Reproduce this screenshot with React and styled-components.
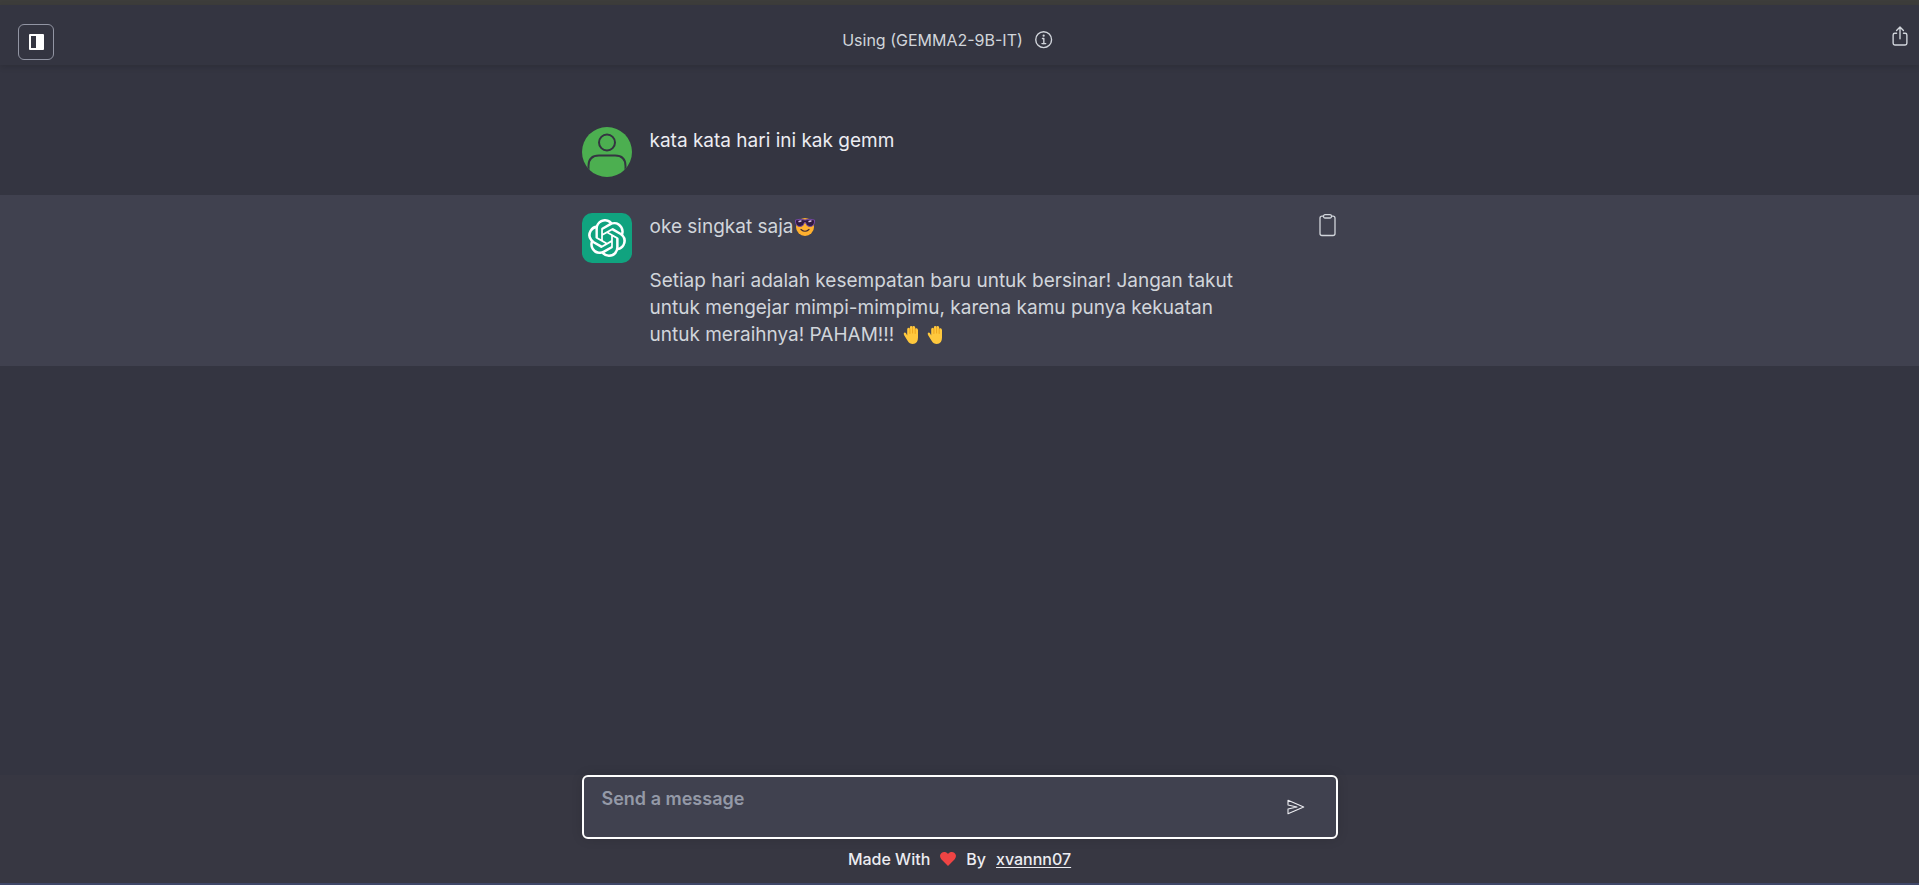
import React from "react";
import styled, { createGlobalStyle } from "styled-components";
import { IoInformationCircleOutline, IoShareOutline } from "react-icons/io5";
import { SiOpenai } from "react-icons/si";

const GlobalStyle = createGlobalStyle`
  *, *::before, *::after { box-sizing: border-box; }
  body {
    margin: 0;
    background: #343541;
    color: #ececf1;
    font-family: Inter, "Open Sans", sans-serif;
  }
  p { margin: 0; }
  svg { display: block; }
`;

const Page = styled.div`
  display: flex;
  flex-direction: column;
  min-height: 100vh;
  border-top: 5px solid #3d3d3b;
  border-bottom: 2px solid #3f4768;
`;

const Header = styled.header`
  display: grid;
  grid-template-columns: 1fr auto 1fr;
  align-items: start;
  height: 60px;
  padding: 0 8px 0 18px;
  color: #d1d5db;
  box-shadow: 0 2px 6px rgba(0, 0, 0, 0.14);
`;

const IconButton = styled.button`
  display: inline-flex;
  align-items: center;
  justify-content: center;
  padding: 0;
  border: 0;
  background: none;
  color: inherit;
  cursor: pointer;
`;

const SidebarButton = styled(IconButton)`
  width: 36px;
  height: 36px;
  margin-top: 19px;
  border: 1px solid #9295a3;
  border-radius: 6px;
  color: #fff;
`;

const ShareButton = styled(IconButton)`
  justify-self: end;
  margin-top: 20px;
`;

const Model = styled.div`
  display: flex;
  align-items: center;
  gap: 10px;
  height: 70px;
  margin-right: 32px;
  font-size: 16px;
  line-height: 24px;
`;

const Chat = styled.main`
  flex: 1;
  padding-top: 44px;
`;

const Row = styled.article`
  padding: 18px 16px;
  background: ${(p) => (p.$assistant ? "#40414f" : "transparent")};
  color: ${(p) => (p.$assistant ? "#d1d5db" : "#ececf1")};
`;

const RowInner = styled.div`
  display: flex;
  align-items: flex-start;
  max-width: 756px;
  margin: 0 auto;
`;

const Avatar = styled.div`
  display: flex;
  flex: none;
  align-items: center;
  justify-content: center;
  width: 50px;
  height: 50px;
  margin-right: 18px;
  overflow: hidden;
  border-radius: ${(p) => (p.$square ? "10px" : "50%")};
  background: ${(p) => (p.$square ? "#10a37f" : "#4caf50")};
  color: #fff;
`;

const Message = styled.div`
  flex: 1;
  max-width: 600px;
  font-size: 19px;
  line-height: 27px;

  p + p { margin-top: 27px; }
`;

const Emoji = styled.svg`
  display: inline-block;
  width: 20px;
  height: 20px;
  margin: 0 2px;
  vertical-align: -4px;
`;

const CopyButton = styled(IconButton)`
  margin-left: auto;
`;

const Footer = styled.footer`
  padding: 0 16px 12px;
  background: #373742;
`;

const Composer = styled.form`
  display: flex;
  align-items: center;
  max-width: 756px;
  height: 64px;
  margin: 0 auto;
  padding-right: 30px;
  border: 2px solid #fff;
  border-radius: 6px;
  background: #40414f;
  box-shadow: 0 0 12px rgba(0, 0, 0, 0.12);
`;

const Input = styled.textarea`
  flex: 1;
  height: 60px;
  padding: 8px 18px;
  border: 0;
  outline: 0;
  resize: none;
  background: none;
  color: #fff;
  font: 600 18px/28px Inter, "Open Sans", sans-serif;

  &::placeholder { color: #9499a7; opacity: 1; }
`;

const Credit = styled.p`
  display: flex;
  align-items: center;
  justify-content: center;
  gap: 10px;
  margin-top: 8px;
  font-size: 16px;
  font-weight: 500;
  line-height: 24px;
`;

const CreditLink = styled.a`
  color: inherit;
  text-underline-offset: 2px;
`;

function SidebarIcon() {
  return (
    <svg width="16" height="18" viewBox="0 0 16 18" aria-hidden="true">
      <rect x="1" y="1" width="15" height="16" rx="1" fill="#fff" />
      <rect x="3" y="3" width="5" height="12" fill="#343541" />
    </svg>
  );
}

function PersonIcon() {
  return (
    <svg width="50" height="50" viewBox="0 0 50 50" fill="none" stroke="#343541" strokeWidth="2" aria-hidden="true">
      <circle cx="25" cy="15.5" r="8" />
      <path d="M6.500 44V39Q6.500 28.500 17 28.500H33Q43.500 28.500 43.500 39V44" />
    </svg>
  );
}

function ClipboardIcon() {
  return (
    <svg width="22" height="24" viewBox="0 0 22 24" fill="none" stroke="currentColor" strokeWidth="1.3" aria-hidden="true">
      <path d="M7.500 3.200H6Q4 3.200 4 5.200V20.500Q4 22.500 6 22.500H17Q19 22.500 19 20.500V5.200Q19 3.200 17 3.200H15.500" />
      <rect x="7.500" y="1.700" width="8" height="3.300" rx="1.500" />
    </svg>
  );
}

function SendIcon() {
  return (
    <svg width="20" height="20" viewBox="0 0 20 20" fill="none" stroke="#ececf1" strokeWidth="1.1" strokeLinejoin="round" aria-hidden="true">
      <path d="M2 3.300L17.700 10L2 16.800V12L11 10L2 8Z" />
    </svg>
  );
}

function CoolFace() {
  return (
    <Emoji viewBox="0 0 20 20" role="img" aria-label="smiling face with sunglasses">
      <circle cx="10" cy="10" r="9" fill="#ffb02e" />
      <path d="M.5 3Q5 1.500 10 3Q15 1.500 19.500 3V5Q19 9.500 14.800 9.500Q11.500 9.500 10.500 5.500H9.500Q8.500 9.500 5.200 9.500Q1 9.500.5 5Z" fill="#321b41" stroke="#7347a3" strokeWidth="1" />
      <path d="M4 4.500l2-.5M14 4.500l2-.5" stroke="#d8bfe9" strokeWidth="1.300" strokeLinecap="round" />
      <path d="M6 12.500Q10 16 14 12.500" fill="none" stroke="#402a32" strokeWidth="1.200" strokeLinecap="round" />
    </Emoji>
  );
}

function RaisedHand() {
  return (
    <Emoji viewBox="0 0 20 20" role="img" aria-label="raised back of hand">
      <path d="M5.200 10.500V4.300Q5.200 2.800 6.500 2.800T7.900 4.200V2.300Q7.900 1 9.200 1T10.600 2.300V1.800Q10.700.8 11.900 1T13.200 2.500V4Q13.500 3.200 14.600 3.300T16 5V12.500Q16 19 10.800 19Q7.500 19 5.600 15.800L2.300 10.500Q1 8.500 2.200 7.700Q3.200 7 4.200 8.600Z" fill="#ffc83d" />
      <path d="M7.900 4V8.500M10.600 2.500V8M13.200 4V8.500" stroke="#e89b16" strokeWidth=".8" strokeLinecap="round" />
    </Emoji>
  );
}

function HeartIcon() {
  return (
    <svg width="16" height="16" viewBox="0 0 16 16" fill="#ef4444" role="img" aria-label="love">
      <path d="M8 15L1.300 8.200C-.5 6.300-.3 3.400 1.500 2C3.400.5 6.200.8 8 3C9.800.8 12.600.5 14.500 2C16.300 3.400 16.500 6.300 14.700 8.200Z" />
    </svg>
  );
}

export default function App() {
  return (
    <>
      <GlobalStyle />
      <Page>
        <Header>
          <div>
            <SidebarButton type="button" aria-label="Toggle sidebar">
              <SidebarIcon />
            </SidebarButton>
          </div>
          <Model>
            <span>Using (GEMMA2-9B-IT)</span>
            <IoInformationCircleOutline size={22} />
          </Model>
          <ShareButton type="button" aria-label="Share">
            <IoShareOutline size={22} />
          </ShareButton>
        </Header>

        <Chat>
          <Row>
            <RowInner>
              <Avatar>
                <PersonIcon />
              </Avatar>
              <Message>
                <p>kata kata hari ini kak gemm</p>
              </Message>
            </RowInner>
          </Row>
          <Row $assistant>
            <RowInner>
              <Avatar $square>
                <SiOpenai size={38} />
              </Avatar>
              <Message>
                <p>
                  oke singkat saja
                  <CoolFace />
                </p>
                <p>
                  Setiap hari adalah kesempatan baru untuk bersinar! Jangan takut
                  untuk mengejar mimpi-mimpimu, karena kamu punya kekuatan untuk
                  meraihnya! PAHAM!!! <RaisedHand />
                  <RaisedHand />
                </p>
              </Message>
              <CopyButton type="button" aria-label="Copy message">
                <ClipboardIcon />
              </CopyButton>
            </RowInner>
          </Row>
        </Chat>

        <Footer>
          <Composer onSubmit={(e) => e.preventDefault()}>
            <Input aria-label="Message" placeholder="Send a message" />
            <IconButton type="submit" aria-label="Send">
              <SendIcon />
            </IconButton>
          </Composer>
          <Credit>
            <span>Made With</span>
            <HeartIcon />
            <span>By</span>
            <CreditLink href="#xvannn07">xvannn07</CreditLink>
          </Credit>
        </Footer>
      </Page>
    </>
  );
}
